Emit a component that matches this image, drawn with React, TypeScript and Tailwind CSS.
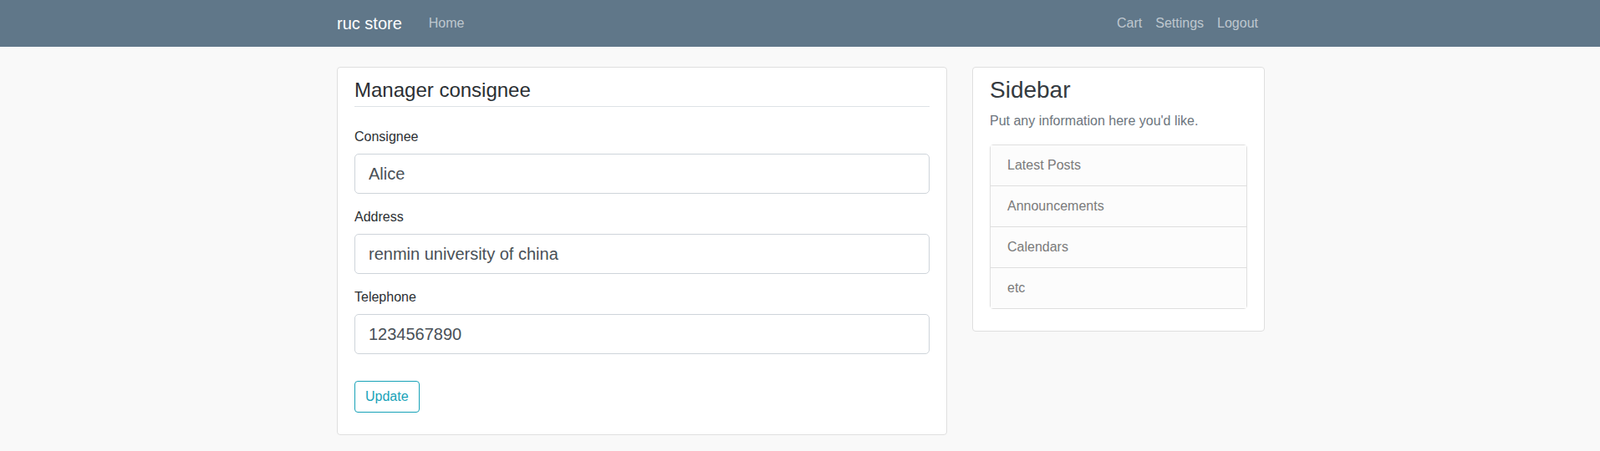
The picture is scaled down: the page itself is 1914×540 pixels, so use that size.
import React from "react";

const fields = [
  { id: "consignee", label: "Consignee", value: "Alice" },
  { id: "address", label: "Address", value: "renmin university of china" },
  { id: "telephone", label: "Telephone", value: "1234567890" },
];

const sideLinks = ["Latest Posts", "Announcements", "Calendars", "etc"];

const Navbar = () => (
  <nav className="bg-[#607789] h-14">
    <div className="mx-auto w-[1140px] pl-[16px] pr-[14px] h-full flex items-center justify-between">
      <div className="flex items-center">
        <a className="text-white text-[20px] leading-[30px] mr-[24px]">ruc store</a>
        <a className="px-2 text-white/60 text-base leading-6">Home</a>
      </div>
      <div className="flex items-center">
        {["Cart", "Settings", "Logout"].map((l) => (
          <a key={l} className="px-2 text-white/60 text-base leading-6">
            {l}
          </a>
        ))}
      </div>
    </div>
  </nav>
);

const ConsigneeCard = () => (
  <div className="bg-white border border-[#dfdfdf] rounded px-5 pt-[13px] pb-[26px]">
    <h4 className="text-[24px] leading-[1.2] text-[#2b2f33] pb-1 border-b border-[#dee2e6]">
      Manager consignee
    </h4>
    <form className="mt-6" onSubmit={(e) => e.preventDefault()}>
      {fields.map((f) => (
        <div key={f.id} className="mb-4">
          <label htmlFor={f.id} className="block text-base leading-6 mb-2 text-[#2b2f33]">
            {f.label}
          </label>
          <input
            id={f.id}
            defaultValue={f.value}
            className="block w-full h-12 px-4 pt-[2px] text-[20px] text-[#495057] bg-white border border-[#ced4da] rounded-[5px] outline-none"
          />
        </div>
      ))}
      <button
        type="submit"
        className="mt-4 h-[38px] px-3 text-base text-[#17a2b8] border border-[#17a2b8] rounded bg-transparent"
      >
        Update
      </button>
    </form>
  </div>
);

const Sidebar = () => (
  <div className="bg-white border border-[#dfdfdf] rounded px-5 pt-[10px] pb-[26px]">
    <h3 className="text-[28px] leading-[1.2] text-[#343a40] mb-2">Sidebar</h3>
    <p className="text-base leading-6 text-[#6c757d] mb-4">
      Put any information here you'd like.
    </p>
    <ul className="border border-[#dfdfdf] rounded">
      {sideLinks.map((l, i) => (
        <li
          key={l}
          className={`bg-[#fcfcfc] px-5 py-3 text-base leading-6 text-[#7a7a7a] ${
            i > 0 ? "border-t border-[#dfdfdf]" : ""
          }`}
        >
          {l}
        </li>
      ))}
    </ul>
  </div>
);

export default function App() {
  return (
    <div className="min-h-screen bg-[#f9f9f9] font-['Liberation_Sans',Arial,sans-serif]">
      <Navbar />
      <div className="mx-auto w-[1140px] pl-[16px] pr-[14px] mt-6">
        <div className="flex -mx-[15px]">
          <div className="w-[760px] px-[15px]">
            <ConsigneeCard />
          </div>
          <div className="w-[380px] px-[15px]">
            <Sidebar />
          </div>
        </div>
      </div>
    </div>
  );
}
